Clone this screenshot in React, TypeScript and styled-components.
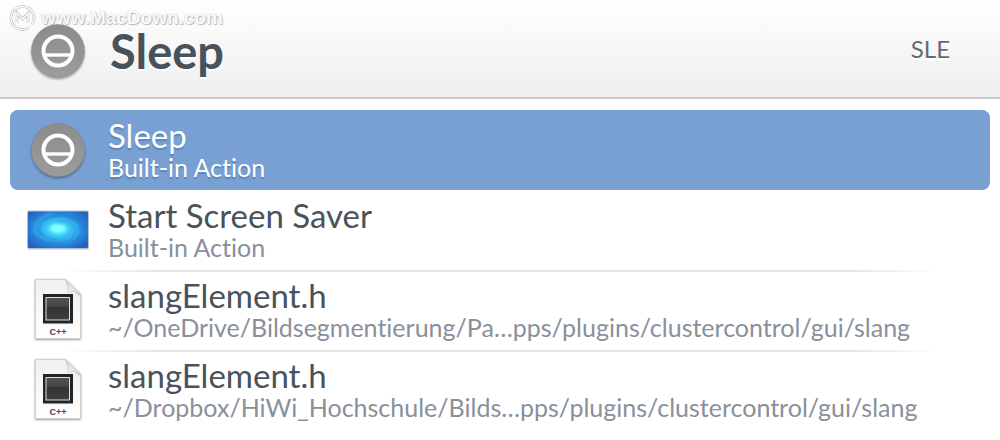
import React from "react";
import styled, { createGlobalStyle, css } from "styled-components";

const Page = createGlobalStyle`
  * { box-sizing: border-box; }
  body {
    margin: 0;
    background: #fff;
    font-family: Lato, "Noto Sans", sans-serif;
    font-variant-ligatures: none;
    color: #46505a;
  }
`;

const Launcher = styled.main`
  position: relative;
  width: 100%;
`;

const Header = styled.header`
  display: flex;
  align-items: center;
  gap: 20px;
  height: 99px;
  padding: 4px 50px 0 26px;
  background: linear-gradient(#ffffff, #eeeeee);
  border-bottom: 2px solid #c9c9c9;
`;

const Title = styled.h1`
  flex: 1;
  margin: 0;
  font-size: 47px;
  line-height: 40px;
  font-weight: 700;
  color: #48525b;
  text-shadow: 0 2px 0 #fff;
`;

const Abbreviation = styled.span`
  padding-bottom: 4px;
  font-size: 24px;
  line-height: 28px;
  color: #646974;
  text-shadow: 0 2px 0 #fff;
`;

const Results = styled.ul`
  list-style: none;
  margin: 0;
  padding: 11px 10px 10px;
`;

const Result = styled.button<{ $selected?: boolean; $divided?: boolean }>`
  display: flex;
  align-items: center;
  gap: 18px;
  width: 100%;
  height: 80px;
  padding: 0 16px;
  border: 0;
  border-radius: 8px;
  background: transparent;
  color: #48525b;
  font-family: inherit;
  font-variant-ligatures: inherit;
  text-align: left;
  ${(p) =>
    p.$divided &&
    css`
      border-radius: 0;
      background: linear-gradient(90deg, transparent 5%, #e6e6e6 15%, #e6e6e6 86%, transparent 95%) top / 100% 2px
        no-repeat;
    `}
  ${(p) =>
    p.$selected &&
    css`
      background: #78a0d3;
      color: #fff;
      text-shadow: 0 2px 1px rgba(50, 80, 130, 0.35);
    `}
`;

const IconSlot = styled.span`
  display: flex;
  flex: none;
  justify-content: center;
  width: 64px;
`;

const Labels = styled.span`
  display: flex;
  flex-direction: column;
  min-width: 0;
  padding-bottom: 2px;
`;

const Name = styled.span`
  font-size: 33px;
  line-height: 36px;
`;

const Detail = styled.span<{ $selected?: boolean }>`
  font-size: 25px;
  line-height: 28px;
  white-space: nowrap;
  color: ${(p) => (p.$selected ? "#fff" : "#89909c")};
`;

const Watermark = styled.div`
  position: absolute;
  top: 4px;
  left: 9px;
  display: flex;
  align-items: center;
  gap: 5px;
  font-family: "Liberation Sans", Arial, sans-serif;
  font-size: 19px;
  line-height: 20px;
  font-weight: 700;
  color: #fafafa;
  text-shadow: 0 0 1px #aaa, 1px 1px 1px #bbb;
  pointer-events: none;
`;

const SleepIcon = () => (
  <svg width="60" height="64" viewBox="0 0 60 64" aria-hidden="true">
    <defs>
      <linearGradient id="disc" x2="0" y2="1">
        <stop stopColor="#8c8c8c" />
        <stop offset="1" stopColor="#9c9c9c" />
      </linearGradient>
      <filter id="discShadow" x="-20%" y="-20%" width="140%" height="140%">
        <feDropShadow dx="0" dy="1.5" stdDeviation="1" floodOpacity="0.4" />
      </filter>
    </defs>
    <circle cx="30" cy="32" r="26.5" fill="url(#disc)" stroke="#858585" strokeWidth=".5" filter="url(#discShadow)" />
    <circle cx="30" cy="32" r="14.5" fill="none" stroke="#fff" strokeWidth="4" />
    <path d="M16 36H44" stroke="#fff" strokeWidth="3.4" />
  </svg>
);

const ScreenSaverIcon = () => (
  <svg width="64" height="42" viewBox="0 0 64 42" aria-hidden="true">
    <defs>
      <radialGradient id="galaxy" cx=".5" cy=".48" r=".62">
        <stop stopColor="#9cffff" />
        <stop offset=".14" stopColor="#5defff" />
        <stop offset=".34" stopColor="#2fc0f3" />
        <stop offset=".62" stopColor="#268fdf" />
        <stop offset="1" stopColor="#2862bd" />
      </radialGradient>
      <filter id="haze">
        <feGaussianBlur stdDeviation=".9" />
      </filter>
    </defs>
    <rect x="1" y="1.500" width="62" height="39" rx="2" fill="#b5bed0" />
    <rect x="2" y="2.500" width="60" height="36.500" rx="1" fill="url(#galaxy)" />
    <g fill="none" filter="url(#haze)" strokeLinecap="round">
      <path
        d="M32 19C40 15 44 21 38 25C29 30 16 26 18 18C21 8 45 8 51 18C54 25 48 32 38 35M31 21C22 24 21 17 27 14C36 10 49 15 46 24C42 34 15 34 9 23C6 15 15 7 26 5"
        stroke="#61ddff"
        strokeOpacity=".4"
        strokeWidth="1.5"
      />
      <path
        d="M4 19C8 34 35 40 51 30M59 21C56 7 34 2 16 10M13 20C14 28 23 31 32 31M49 19C46 13 37 11 30 12"
        stroke="#1f62c6"
        strokeOpacity=".35"
        strokeWidth="1.5"
      />
      <ellipse cx="32" cy="19.500" rx="8" ry="4" fill="#86ffff" fillOpacity=".9" />
    </g>
  </svg>
);

const HeaderFileIcon = () => (
  <svg width="52" height="66" viewBox="0 0 52 66" aria-hidden="true">
    <defs>
      <linearGradient id="paper" x2="0" y2="1">
        <stop stopColor="#f0f0f0" />
        <stop offset="1" stopColor="#fff" />
      </linearGradient>
      <linearGradient id="fold" x1="0" y1="1" x2="1" y2="0">
        <stop stopColor="#fff" />
        <stop offset=".5" stopColor="#ddd" />
        <stop offset="1" stopColor="#aaa" />
      </linearGradient>
      <linearGradient id="chip" x2="0" y2="1">
        <stop stopColor="#505050" />
        <stop offset=".4" stopColor="#454545" />
        <stop offset=".45" stopColor="#343434" />
        <stop offset="1" stopColor="#404040" />
      </linearGradient>
      <filter id="paperShadow" x="-10%" y="-10%" width="120%" height="120%">
        <feDropShadow dx="0" dy=".8" stdDeviation=".8" floodOpacity=".5" />
      </filter>
    </defs>
    <path d="M3.500 2.500H33L48.500 17V61.500H3.500Z" fill="url(#paper)" stroke="#c5c5c5" strokeWidth=".6" filter="url(#paperShadow)" />
    <path d="M34 7L48 20V17L34 4Z" fill="#999" opacity=".35" />
    <path d="M33.500 2.500C36 8 36 12 35.500 15.500C40 14 44 14.500 48.500 17Z" fill="url(#fold)" stroke="#bbb" strokeWidth=".5" />
    <rect x="11" y="17" width="30" height="29.500" fill="#252525" />
    <rect x="14" y="20.500" width="23.500" height="22.500" fill="url(#chip)" stroke="#ddd" strokeWidth="1" />
    <text
      x="26"
      y="58"
      textAnchor="middle"
      fontFamily="Liberation Sans, Arial, sans-serif"
      fontSize="9"
      fontWeight="700"
      fill="#444"
    >
      C++
    </text>
  </svg>
);

const WatermarkLogo = () => (
  <svg width="27" height="28" viewBox="0 0 27 28" fill="none" aria-hidden="true">
    <g stroke="#b5b5b5" strokeWidth="2.600">
      <path d="M20 23.500A11.500 11.500 0 1 1 23 20.500" />
      <path d="M8 19V9L13.500 15L19 9V19" />
    </g>
    <g stroke="#fff" strokeWidth="1.400">
      <path d="M20 23.500A11.500 11.500 0 1 1 23 20.500" />
      <path d="M8 19V9L13.500 15L19 9V19" />
    </g>
  </svg>
);

const items = [
  { name: "Sleep", detail: "Built-in Action", Icon: SleepIcon },
  { name: "Start Screen Saver", detail: "Built-in Action", Icon: ScreenSaverIcon },
  {
    name: "slangElement.h",
    detail: "~/OneDrive/Bildsegmentierung/Pa…pps/plugins/clustercontrol/gui/slang",
    Icon: HeaderFileIcon,
  },
  {
    name: "slangElement.h",
    detail: "~/Dropbox/HiWi_Hochschule/Bilds…pps/plugins/clustercontrol/gui/slang",
    Icon: HeaderFileIcon,
  },
];

export default function App() {
  const selected = 0;
  return (
    <Launcher>
      <Page />
      <Header>
        <IconSlot>
          <SleepIcon />
        </IconSlot>
        <Title>Sleep</Title>
        <Abbreviation>SLE</Abbreviation>
      </Header>
      <Results>
        {items.map(({ name, detail, Icon }, i) => (
          <li key={detail + i}>
            <Result type="button" $selected={i === selected} $divided={i > selected + 1}>
              <IconSlot>
                <Icon />
              </IconSlot>
              <Labels>
                <Name>{name}</Name>
                <Detail $selected={i === selected}>{detail}</Detail>
              </Labels>
            </Result>
          </li>
        ))}
      </Results>
      <Watermark>
        <WatermarkLogo />
        www.MacDown.com
      </Watermark>
    </Launcher>
  );
}
